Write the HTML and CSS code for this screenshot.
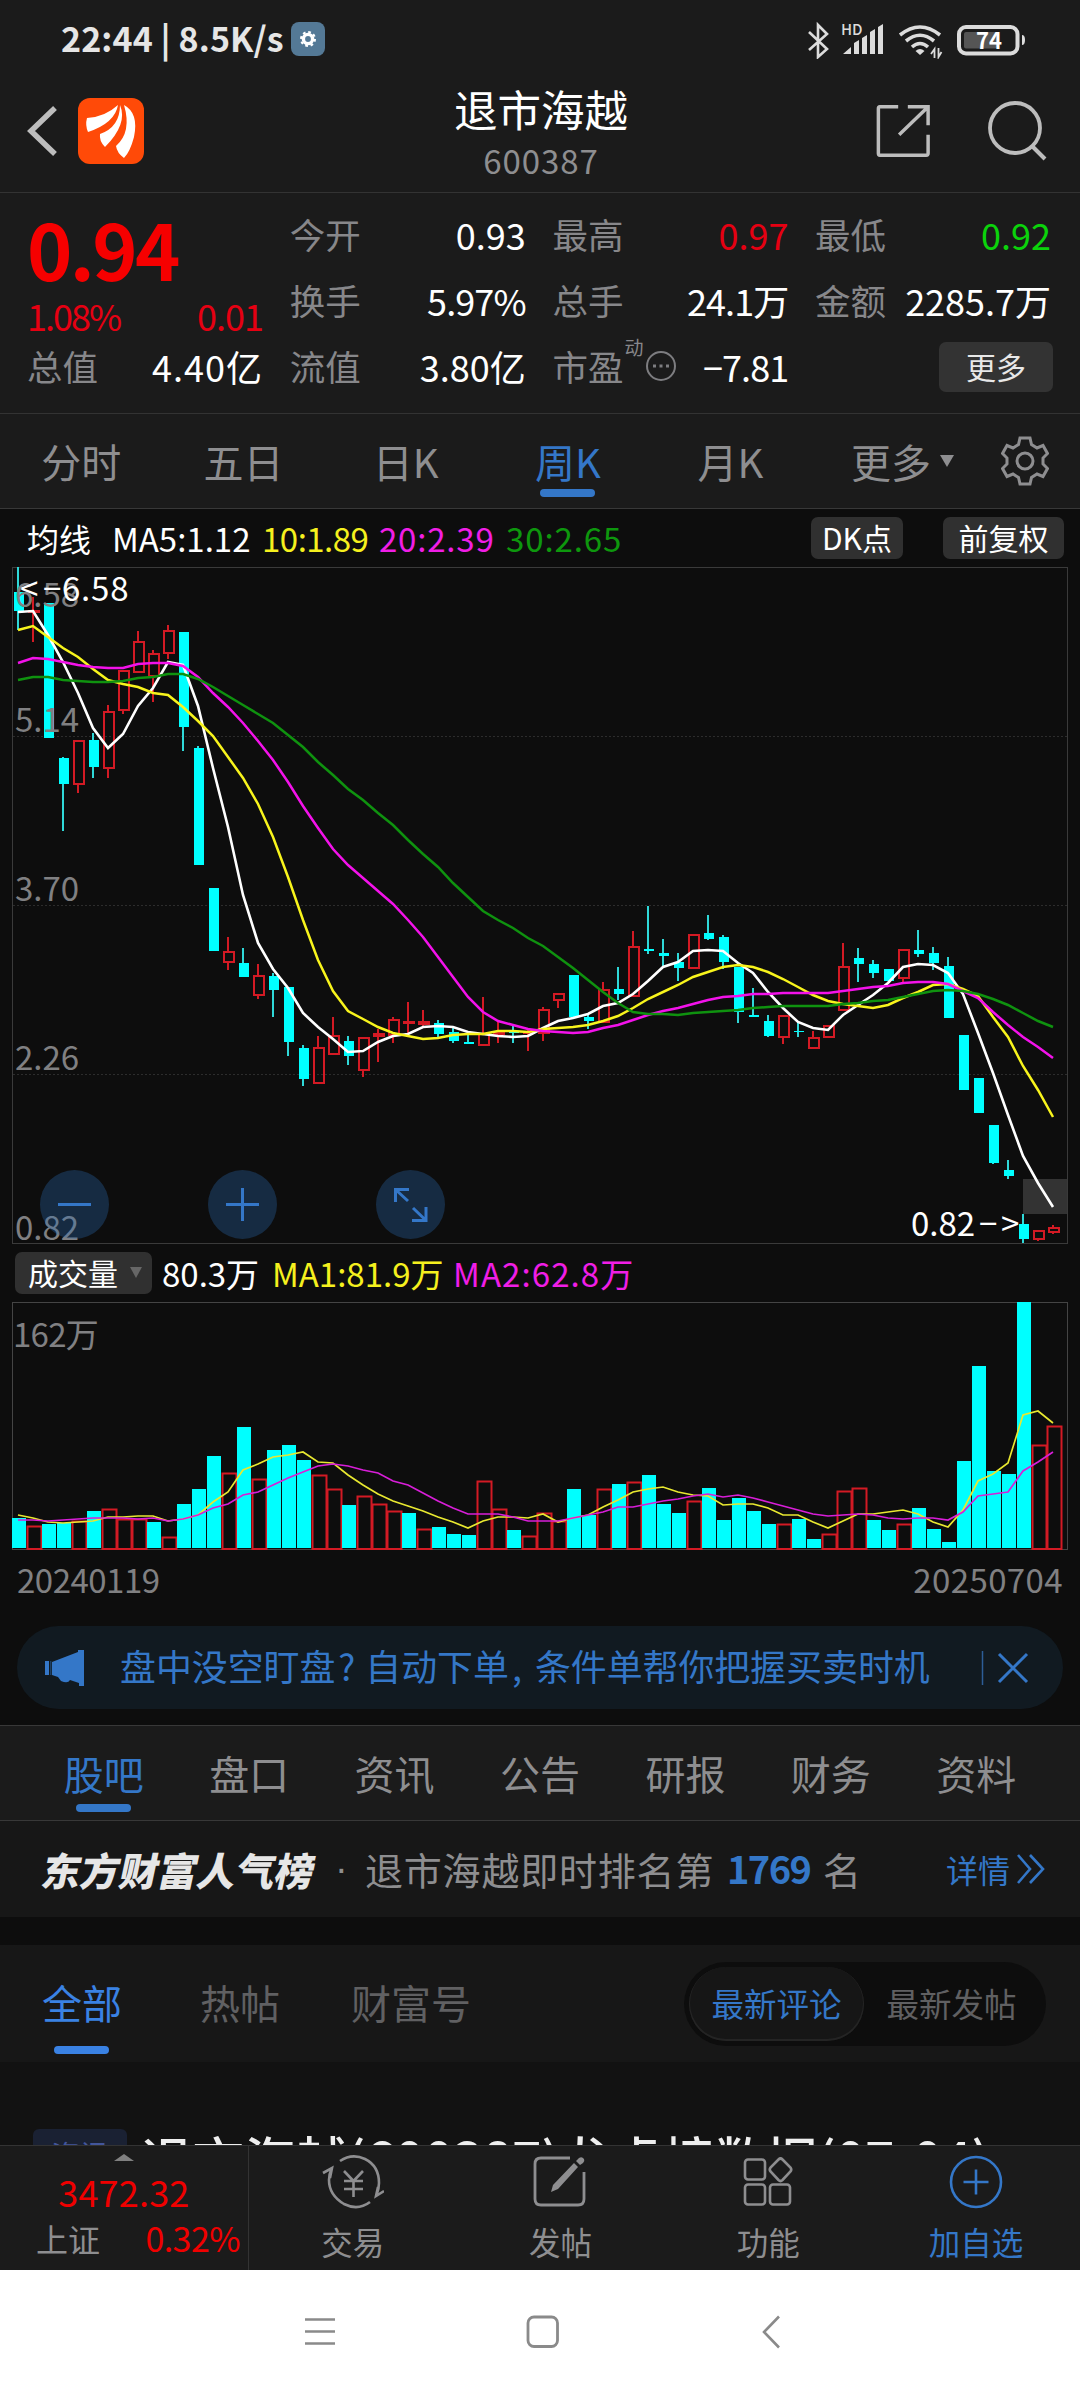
FILE: index.html
```html
<!DOCTYPE html>
<html lang="zh-CN">
<head>
  <meta charset="UTF-8" />
  <meta name="viewport" content="width=device-width, initial-scale=1.0"/>
  <title>退市海越 600387</title>
  <link rel="stylesheet" href="styles.css">
</head>
<body>

  <div class="statusbar">
    <span class="clock">22:44 | 8.5K/s</span>
    <span class="badge">
      <svg width="16" height="16" viewBox="0 0 16 16"><circle cx="8" cy="8" r="4.6" fill="none" stroke="#fff" stroke-width="3.4"/><circle cx="8" cy="8" r="7" fill="none" stroke="#fff" stroke-width="2" stroke-dasharray="2.75 2.75"/></svg>
    </span>
    <svg class="status-icons" width="220" height="40" viewBox="806 18 220 40">
      <path d="M809 31 L827 48 L818 56 V24 L827 33 L809 49" fill="none" stroke="#dcdcdc" stroke-width="2.6"/>
      <text x="841" y="34" class="hd">HD</text>
      <path d="M843 53 L851 46 V53Z M854 53 V42 L859 39 V53Z M862 53 V37 L867 34 V53Z M870 53 V31 L875 28 V53Z M878 53 V26 L883 23 V53Z" fill="#dcdcdc"/>
      <g fill="none" stroke="#dcdcdc" stroke-width="3.6">
        <path d="M900 34 Q920 18 940 34"/>
        <path d="M906 40 Q920 28.500 934 40"/>
        <path d="M912 46 Q920 39 928 46"/>
      </g>
      <path d="M915.500 50 Q920 46 924.500 50 L920 54Z" fill="#dcdcdc"/>
      <path d="M934.500 57 V48 L931 53 M938.500 47 V56 L941.500 51" fill="none" stroke="#dcdcdc" stroke-width="1.8"/>
      <rect x="959" y="26" width="58.500" height="26.500" rx="7" fill="none" stroke="#dcdcdc" stroke-width="4"/>
      <rect x="964" y="31" width="33" height="16.500" rx="2" fill="#555"/>
      <path d="M1022 34 Q1025 34 1025 39 Q1025 44 1022 44Z" fill="#dcdcdc"/>
      <text x="976" y="47.500" class="battery">74</text>
    </svg>
  </div>

  <div class="header">
    <svg class="back" width="32" height="54" viewBox="0 0 32 54"><path d="M29 4 L5 27 L29 50" fill="none" stroke="#bdbdbd" stroke-width="5.500"/></svg>
    <svg class="logo" width="66" height="66" viewBox="0 0 66 66">
      <rect width="66" height="66" rx="12" fill="#ff4a08"/>
      <path d="M9 20 Q27 19 40 7 Q37 25 10 34 Q7 27 9 20Z" fill="#fff"/>
      <path d="M42 7 Q50 26 27 49 Q21 43 22 36 Q42 29 42 7Z" fill="#fff"/>
      <path d="M46 7 Q61 15 56 39 Q52 54 46 60 Q39 55 38 48 Q54 34 46 7Z" fill="#fff"/>
    </svg>
    <div class="title">
      <h1>退市海越</h1>
      <p>600387</p>
    </div>
    <svg class="share" width="56" height="56" viewBox="0 0 58 58"><path d="M24 4 H5 Q3.500 4 3.500 6 V52 Q3.500 54 5 54 H53 Q55 54 55 52 V33 M34 4 H55 V23 M54 5 L25 33" fill="none" stroke="#bdbdbd" stroke-width="3.600"/></svg>
    <svg class="search" width="62" height="62" viewBox="0 0 62 62"><circle cx="28" cy="28" r="25" fill="none" stroke="#bdbdbd" stroke-width="3.800"/><path d="M45 46 L58 59" stroke="#bdbdbd" stroke-width="4"/></svg>
  </div>

  <div class="quote">
    <div class="col">
      <div class="price">0.94</div>
      <div class="row change"><b class="pct">1.08%</b><b>0.01</b></div>
      <div class="row"><span>总值</span><b class="loose">4.40亿</b></div>
    </div>
    <div class="col">
      <div class="row"><span>今开</span><b>0.93</b></div>
      <div class="row"><span>换手</span><b class="tight">5.97%</b></div>
      <div class="row"><span>流值</span><b>3.80亿</b></div>
    </div>
    <div class="col">
      <div class="row"><span>最高</span><b class="up">0.97</b></div>
      <div class="row"><span>总手</span><b class="tight">24.1万</b></div>
      <div class="row">
        <span class="pe">市盈<sup>动</sup><svg width="32" height="32" viewBox="0 0 32 32"><circle cx="16" cy="16" r="14" fill="none" stroke="#7d7d80" stroke-width="2"/><path d="M8 16h3M14.500 16h3M21 16h3" stroke="#7d7d80" stroke-width="3"/></svg></span>
        <b class="tight">−7.81</b>
      </div>
    </div>
    <div class="col">
      <div class="row"><span>最低</span><b class="down">0.92</b></div>
      <div class="row"><span>金额</span><b>2285.7万</b></div>
      <div class="row end"><button class="more">更多</button></div>
    </div>
  </div>

  <div class="periods">
    <span>分时</span>
    <span>五日</span>
    <span>日K</span>
    <span class="active">周K</span>
    <span>月K</span>
    <span class="wide">更多<i class="caret"></i></span>
    <svg width="48" height="50" viewBox="0 0 48 50">
      <path d="M19 2 H29 L30.500 8.500 L36 12 L42 9.500 L46.500 17.500 L42 22 V28 L46.500 32.500 L42 40.500 L36 38 L30.500 41.500 L29 48 H19 L17.500 41.500 L12 38 L6 40.500 L1.500 32.500 L6 28 V22 L1.500 17.500 L6 9.500 L12 12 L17.500 8.500Z" fill="none" stroke="#8e8e90" stroke-width="3"/>
      <circle cx="24" cy="25" r="8" fill="none" stroke="#8e8e90" stroke-width="3"/>
    </svg>
  </div>

  <div class="legend">
    <span class="name">均线</span>
    <span class="ma5">MA5:1.12</span>
    <span class="ma10">10:1.89</span>
    <span class="ma20">20:2.39</span>
    <span class="ma30">30:2.65</span>
    <button class="dk">DK点</button>
    <button class="fq">前复权</button>
  </div>

  <svg id="kline" class="kline" viewBox="0 567 1080 679"></svg>

  <div class="legend volume-legend">
    <button class="vol">成交量<i class="caret"></i></button>
    <span class="v0">80.3万</span>
    <span class="v1">MA1:81.9万</span>
    <span class="v2">MA2:62.8万</span>
  </div>

  <svg id="volume" class="volume" viewBox="0 1300 1080 252"></svg>
  <div class="dates"><span class="from">20240119</span><span class="to">20250704</span></div>

  <div class="notice">
    <svg width="44" height="40" viewBox="0 0 44 40"><path d="M2 13h4v14H2z M9 14 L35 4 V2 H41 V38 H36 V35 L27 32 Q25 36 18 33 L15 29 L9 27Z" fill="#3477c8"/><path d="M7.800 13v14" stroke="#24517f" stroke-width="1"/></svg>
    <p>盘中没空盯盘<i class="q">?</i>自动下单<i class="c">,</i>条件单帮你把握买卖时机</p>
    <svg class="close" width="48" height="36" viewBox="0 0 48 36"><path d="M1.500 1v34" stroke="#2d5d97" stroke-width="1.500"/><path d="M18 4 L46 32 M46 4 L18 32" stroke="#3477c8" stroke-width="3"/></svg>
  </div>

  <div class="tabs">
    <span class="active">股吧</span>
    <span>盘口</span>
    <span>资讯</span>
    <span>公告</span>
    <span>研报</span>
    <span>财务</span>
    <span>资料</span>
  </div>

  <div class="rank">
    <strong>东方财富人气榜</strong>
    <i>·</i>
    <span class="desc">退市海越即时排名第</span>
    <em>1769</em>
    <span>名</span>
    <a>详情<svg width="30" height="32" viewBox="0 0 30 32"><path d="M2 2 L14 16 L2 30 M14 2 L27 16 L14 30" fill="none" stroke="#3477c8" stroke-width="2.600"/></svg></a>
  </div>

  <div class="filter">
    <span class="active">全部</span>
    <span>热帖</span>
    <span>财富号</span>
    <div class="switch"><span class="on">最新评论</span><span>最新发帖</span></div>
  </div>

  <div class="post">
    <span class="tag">资讯</span>
    <h3>退市海越(600387)龙虎榜数据(07-04)</h3>
  </div>

  <div class="bottombar">
    <div class="index">
      <i class="up-caret"></i>
      <b>3472.32</b>
      <p><span>上证</span><b>0.32%</b></p>
    </div>
    <div class="item">
      <svg width="62" height="58" viewBox="0 0 62 58"><g fill="none" stroke="#8e8e90" stroke-width="2.600"><path d="M18 8 Q30 0 43 6 Q57 13 57 30 Q57 36 54.500 42 M62 38 L54 43 L56 34"/><path d="M48 49 Q36 58 22 51 Q7 42 7 27 Q7 21 9.500 16 M1 20 L10 15 L8 25"/><path d="M22 18 L31.500 28 L41 18 M22 28h19M22 36h19M31.500 28v16"/></g></svg>
      <span>交易</span>
    </div>
    <div class="item">
      <svg width="56" height="58" viewBox="0 0 56 58"><path d="M38 5 H9 Q3 5 3 11 V46 Q3 52 9 52 H46 Q52 52 52 46 V19" fill="none" stroke="#8e8e90" stroke-width="2.800"/><path d="M42 10 L46 14 L26 36 L19 39 L21 32Z M44 8 L47 5 Q50 3 52 6 Q53 8 51 10 L48 12Z" fill="#8e8e90"/></svg>
      <span>发帖</span>
    </div>
    <div class="item">
      <svg width="56" height="58" viewBox="0 0 56 58"><g fill="none" stroke="#8e8e90" stroke-width="2.600"><rect x="5" y="6.500" width="20" height="20" rx="3"/><rect x="5" y="31.500" width="20" height="20" rx="3"/><rect x="30" y="31.500" width="20" height="20" rx="3"/><path d="M38.500 6.500 Q40.500 4.500 42.500 6.500 L50.500 14.500 Q52 16.500 50.500 18.500 L42.500 27 Q40.500 29 38.500 27 L30.500 18.500 Q29 16.500 30.500 14.500Z"/></g></svg>
      <span>功能</span>
    </div>
    <div class="item blue">
      <svg width="56" height="58" viewBox="0 0 56 58"><circle cx="28" cy="29" r="25" fill="none" stroke="#3477c8" stroke-width="2.600"/><path d="M15.500 29h25M28 16.500v25" stroke="#3477c8" stroke-width="2.600"/></svg>
      <span>加自选</span>
    </div>
  </div>

  <div class="navbar">
    <svg width="32" height="32" viewBox="0 0 32 32"><path d="M1 3.500h30M1 15.500h30M1 27.500h30" stroke="#8a8a8a" stroke-width="2.600"/></svg>
    <svg width="34" height="34" viewBox="0 0 34 34"><rect x="2" y="2" width="29.500" height="29.500" rx="6" fill="none" stroke="#8a8a8a" stroke-width="2.800"/></svg>
    <svg width="20" height="34" viewBox="0 0 20 34"><path d="M18 1.500 L3 17 L18 32.500" fill="none" stroke="#8a8a8a" stroke-width="2.600"/></svg>
  </div>

  <script src="script.js"></script>
</body>
</html>
```
FILE: styles.css
```css
* {
  box-sizing: border-box;
}
body {
  margin: 0;
  width: 1080px;
  height: 2400px;
  overflow: hidden;
  background-color: #0d0d0d;
  color: #8e8e90;
  font-family: "Noto Sans CJK SC", "Noto Sans", sans-serif;
  font-size: 36px;
  line-height: 1;
}
h1, h3, p {
  margin: 0;
}
i, em {
  font-style: normal;
}
b {
  font-weight: 400;
}
svg {
  display: block;
  flex: none;
}
button {
  border: none;
  padding: 0;
  border-radius: 7px;
  background: #303030;
  color: #fff;
  font-family: inherit;
  font-size: 30px;
  line-height: 1;
}

/* status bar */
.statusbar {
  display: flex;
  align-items: center;
  height: 78px;
  padding: 0 54px 0 61px;
  background: #1b1b1b;
}
.clock {
  width: 230px;
  padding-bottom: 3px;
  color: #e6e6e6;
  font-size: 34px;
  font-weight: 700;
  letter-spacing: 0.1px;
  white-space: nowrap;
}
.badge {
  display: flex;
  align-items: center;
  justify-content: center;
  width: 34px;
  height: 34px;
  border-radius: 8px;
  background: #547996;
}
.status-icons {
  margin-left: auto;
}
.hd {
  font-size: 15px;
  font-weight: 500;
  fill: #dcdcdc;
}
.battery {
  font-size: 22px;
  font-weight: 700;
  fill: #fff;
}

/* header */
.header {
  display: flex;
  align-items: center;
  height: 115px;
  padding: 0 31px 9px 26px;
  background: #1b1b1b;
  border-bottom: 1px solid #333;
}
.logo {
  margin-left: 20px;
}
.title {
  margin-left: 310px;
  padding-top: 3px;
  text-align: center;
}
.header h1 {
  color: #fff;
  font-size: 43.5px;
  font-weight: 400;
}
.header p {
  margin-top: 14px;
  font-size: 33px;
  letter-spacing: 0.9px;
}
.share {
  margin-left: auto;
  margin-right: 56px;
}

/* quote */
.quote {
  display: grid;
  grid-template-columns: repeat(4, 236px);
  column-gap: 26.7px;
  height: 221px;
  padding: 10px 27px 0;
  background: #1b1b1b;
  border-bottom: 1px solid #333;
}
.row {
  display: flex;
  align-items: center;
  justify-content: space-between;
  height: 66px;
  padding-bottom: 4px;
  white-space: nowrap;
}
.row span {
  color: #87878a;
  font-size: 35.5px;
}
.row b {
  color: #fff;
}
.row .tight {
  letter-spacing: -0.9px;
}
.row .loose {
  letter-spacing: 1px;
}
.row .up,
.change b {
  color: #e60012;
}
.row .down {
  color: #0bd30b;
}
.row.end {
  justify-content: flex-end;
  padding-bottom: 2px;
  margin-right: -2px;
}
.price {
  height: 90px;
  color: #f60000;
  font-size: 77px;
  font-weight: 700;
  letter-spacing: -2.6px;
  line-height: 90px;
}
.row.change {
  height: 42px;
  padding: 1px 0 0;
}
.change b {
  letter-spacing: -1px;
}
.change .pct {
  letter-spacing: -2px;
}
.row .pe {
  display: flex;
  align-items: center;
}
.pe sup {
  margin: -38px 2px 0 1px;
  font-size: 19px;
  line-height: 20px;
  vertical-align: baseline;
}
.more {
  width: 114px;
  height: 50px;
  padding-bottom: 3px;
  background: #333;
  color: #e8e8e8;
}

/* period tabs */
.periods {
  display: flex;
  align-items: center;
  height: 95px;
  background: #1b1b1b;
  border-bottom: 1px solid #383838;
}
.periods span {
  width: 162.3px;
  text-align: center;
  font-size: 40px;
}
.periods .wide {
  display: flex;
  align-items: center;
  justify-content: center;
  width: 190px;
  padding-right: 8px;
}
.periods .active,
.tabs .active,
.filter .active {
  position: relative;
  color: #3477c8;
}
.periods .active::after,
.tabs .active::after,
.filter .active::after {
  content: "";
  position: absolute;
  left: 50%;
  bottom: -16px;
  width: 55px;
  height: 8px;
  margin-left: -28px;
  border-radius: 4px;
  background: #3477c8;
}
.caret {
  border: 7.500px solid transparent;
  border-top: 12px solid #8e8e90;
  border-bottom: 0;
  margin-left: 9px;
}

/* chart legends */
.legend {
  display: flex;
  align-items: center;
  height: 58px;
  padding: 0 16px 0 27px;
  color: #fff;
  font-size: 33px;
  white-space: nowrap;
}
.legend .name {
  width: 85px;
  font-size: 32px;
}
.ma5 {
  width: 150px;
}
.ma10 {
  width: 117px;
  color: #f5f01e;
  letter-spacing: -0.5px;
}
.ma20 {
  width: 127px;
  color: #f01ee6;
  letter-spacing: 0.8px;
}
.ma30 {
  color: #0d970d;
  letter-spacing: 0.9px;
}
.legend button {
  height: 42px;
  padding-bottom: 2px;
}
.dk {
  width: 92px;
  margin-left: auto;
}
.fq {
  width: 121px;
  margin-left: 40px;
}
.volume-legend {
  height: 54px;
  padding: 0 0 0 15px;
}
.legend .vol {
  display: flex;
  align-items: center;
  width: 137px;
  padding-left: 13px;
  margin-right: 10px;
}
.vol .caret {
  border-width: 11px 6.500px 0;
  border-top-color: #666;
  margin-left: 12px;
}
.v0 {
  width: 110px;
}
.v1 {
  width: 181px;
  color: #f5f01e;
}
.v2 {
  color: #f01ee6;
  letter-spacing: 1.1px;
}
.kline,
.volume {
  width: 1080px;
}
.kline {
  height: 679px;
}
.volume {
  height: 252px;
}
.axis {
  fill: #808082;
  font-size: 33px;
}
.mark {
  fill: #fff;
  font-size: 33px;
}
.dates {
  display: flex;
  justify-content: space-between;
  height: 74px;
  padding: 11px 17px 0;
  font-size: 33px;
  color: #808082;
}
.from {
  letter-spacing: -0.5px;
}
.to {
  letter-spacing: 0.4px;
}

/* notice */
.notice {
  display: flex;
  align-items: center;
  height: 83px;
  margin: 0 17px 16px;
  padding: 0 34px 0 26px;
  border-radius: 42px;
  background: #111a21;
  color: #3477c8;
}
.notice p {
  margin-left: 33px;
  padding-bottom: 3px;
  white-space: nowrap;
  font-size: 35.9px;
}
.notice .q,
.notice .c {
  display: inline-block;
  width: 30px;
  padding-left: 3px;
}
.notice .c {
  width: 26px;
}
.notice .close {
  margin-left: auto;
}

/* info tabs */
.tabs {
  display: flex;
  align-items: center;
  height: 96px;
  padding: 0 31px;
  background: #1b1b1b;
  border-top: 1px solid #383838;
  border-bottom: 1px solid #383838;
}
.tabs span {
  flex: 1;
  text-align: center;
  font-size: 40px;
}
.tabs .active::after {
  bottom: -19px;
}

.rank {
  display: flex;
  align-items: center;
  height: 96px;
  padding: 0 34px 0 43px;
  margin-bottom: 28px;
  background: #171717;
  white-space: nowrap;
  font-size: 38px;
}
.rank strong {
  width: 292px;
  color: #e6e6e6;
  font-size: 38.900px;
  font-weight: 900;
  transform: skewX(-12deg);
}
.rank i {
  width: 30px;
  font-family: "Liberation Sans", sans-serif;
}
.rank .desc {
  width: 362px;
  letter-spacing: 0.8px;
}
.rank em {
  width: 96px;
  padding-bottom: 3px;
  color: #3477c8;
  font-size: 38px;
  font-weight: 700;
  letter-spacing: -1.600px;
}
.rank a {
  display: flex;
  align-items: center;
  margin-left: auto;
  color: #3477c8;
  font-size: 32px;
}
.rank a svg {
  margin-left: 6px;
}

.filter {
  display: flex;
  align-items: center;
  height: 117px;
  padding: 0 34px 0 42px;
  background: #171717;
  font-size: 40px;
  color: #606062;
}
.filter > span {
  margin-right: 78px;
  padding-bottom: 3px;
}
.filter > span + span {
  margin-right: 71px;
}
.filter .active {
  color: #3a82e4;
}
.filter .active::after {
  bottom: -29px;
  background: #3a82e4;
}
.switch {
  display: flex;
  align-items: center;
  width: 362px;
  height: 84px;
  margin-left: auto;
  padding: 5px;
  border-radius: 42px;
  background: #0d0d0d;
  font-size: 32.500px;
}
.switch span {
  width: 175px;
  height: 74px;
  text-align: center;
  line-height: 72px;
}
.switch .on {
  border-radius: 37px;
  background: #161616;
  box-shadow: inset 0 -1px 0 1px #242424;
  color: #3477c8;
}

/* first post, cut off by the bottom bar */
.post {
  display: flex;
  align-items: flex-start;
  height: 83px;
  padding: 67px 0 0 33px;
  overflow: hidden;
  background: #121212;
  white-space: nowrap;
}
.tag {
  flex: none;
  width: 94px;
  height: 46px;
  border-radius: 6px;
  background: #1a2133;
  color: #43569b;
  font-size: 29px;
  line-height: 50px;
  text-align: center;
}
.post h3 {
  margin: 3px 0 0 14px;
  color: #eee;
  font-size: 51.5px;
  font-weight: 500;
}

/* bottom bar */
.bottombar {
  display: flex;
  height: 125px;
  background: #1b1b1b;
  border-top: 1px solid #333;
}
.index {
  display: flex;
  flex-direction: column;
  align-items: center;
  width: 249px;
  padding-top: 8px;
  border-right: 1px solid #333;
  color: #f00000;
}
.up-caret {
  border: 10px solid transparent;
  border-top: 0;
  border-bottom: 7px solid #808080;
}
.index > b {
  margin-top: 12px;
  letter-spacing: 0.2px;
}
.index p {
  display: flex;
  align-items: center;
  justify-content: space-between;
  width: 204px;
  margin: 12px 0 0 28px;
  font-size: 34px;
}
.index p b {
  letter-spacing: -0.6px;
}
.index span {
  color: #8e8e90;
  font-size: 32px;
}
.item {
  display: flex;
  flex-direction: column;
  align-items: center;
  width: 208px;
  padding-top: 7px;
  font-size: 31.500px;
}
.item span {
  margin-top: 15px;
}
.item.blue {
  color: #3477c8;
}

.navbar {
  display: flex;
  align-items: center;
  height: 130px;
  padding: 0 0 6px 304px;
  background: #fff;
}
.navbar svg + svg {
  margin-left: 190px;
}
.navbar svg + svg + svg {
  margin-left: 201px;
}
```
FILE: script.js
```js
const STEP = 15;
const UP = "#d31a24";
const DOWN = "#00ffff";

// [up/down, body top, body bottom, wick top, wick bottom]
const candles = [
  ["d",592,611,567,630], ["u",610,613,597,642], ["d",603,738,603,738], ["d",758,784,757,831], ["u",740,785,740,793],
  ["d",740,767,733,778], ["u",711,769,705,778], ["u",670,711,670,714], ["u",641,673,631,673], ["u",653,677,650,702],
  ["u",630,654,625,659], ["d",632,727,632,751], ["d",748,865,746,865], ["d",888,951,888,951], ["u",951,963,937,970],
  ["d",963,977,948,977], ["u",975,996,964,999], ["d",976,990,973,1017], ["d",987,1042,987,1056], ["d",1048,1079,1045,1086],
  ["u",1047,1084,1036,1084], ["u",1035,1055,1017,1055], ["d",1041,1056,1036,1065], ["u",1037,1071,1037,1077], ["u",1033,1037,1029,1062],
  ["u",1019,1036,1017,1043], ["u",1021,1024,1002,1033], ["u",1021,1025,1010,1027], ["d",1023,1034,1020,1037], ["d",1032,1041,1028,1043],
  ["d",1042,1044,1033,1044], ["u",1033,1046,997,1046], ["u",1032,1035,1022,1043], ["d",1031,1033,1026,1043], ["u",1031,1034,1030,1051],
  ["u",1009,1034,1007,1041], ["u",993,1001,993,1008], ["d",975,1017,975,1017], ["d",1017,1021,1015,1029], ["u",989,1023,982,1023],
  ["d",989,994,967,1000], ["u",946,997,931,997], ["d",949,951,906,954], ["d",953,956,939,967], ["d",962,968,953,981],
  ["u",934,969,934,969], ["d",933,939,915,940], ["d",937,962,935,969], ["d",967,1012,967,1023], ["d",1015,1017,988,1017],
  ["d",1021,1036,1015,1037], ["u",1015,1038,1015,1044], ["d",1031,1032,1022,1037], ["u",1037,1049,1031,1049], ["u",1025,1038,1025,1038],
  ["u",966,1011,943,1011], ["d",958,964,948,982], ["d",964,973,960,978], ["d",969,981,969,981], ["u",949,979,949,982],
  ["d",950,954,930,957], ["d",953,963,947,970], ["d",966,1018,957,1018], ["d",1035,1090,1035,1090], ["d",1078,1113,1078,1113],
  ["d",1125,1163,1125,1164], ["d",1170,1176,1160,1179], ["d",1224,1239,1214,1243], ["u",1230,1240,1230,1241], ["u",1227,1233,1225,1234]
];

const ma5 = [612,611,635,662,693,728,748,734,706,688,662,665,706,768,827,895,943,969,988,1013,1027,1039,1052,1051,1042,
  1036,1034,1027,1026,1027,1032,1034,1036,1037,1036,1028,1021,1018,1014,1006,1003,994,981,967,962,951,950,951,963,973,
  992,1008,1022,1028,1030,1015,1005,995,983,967,964,965,973,994,1033,1073,1115,1156,1183,1207];
const ma10 = [630,626,637,648,657,669,680,684,687,693,695,707,721,736,757,778,804,837,877,920,960,991,1011,1019,1027,
  1033,1036,1039,1038,1035,1034,1034,1031,1031,1032,1029,1028,1027,1025,1021,1016,1008,999,992,985,977,972,967,965,967,
  972,979,987,995,1001,1004,1006,1008,1005,998,992,985,984,989,996,1017,1037,1066,1090,1117];
const ma20 = [663,658,659,662,665,667,668,668,664,663,663,666,677,693,707,723,741,760,782,806,828,849,865,878,891,
  904,920,937,957,977,997,1012,1021,1025,1029,1031,1032,1033,1032,1028,1025,1020,1015,1011,1008,1004,1000,997,996,994,
  994,993,993,993,993,991,989,987,986,983,982,982,984,991,998,1012,1025,1037,1047,1058];
const ma30 = [680,677,677,680,681,682,682,681,678,677,674,674,679,687,696,705,714,723,735,747,762,775,789,800,813,
  825,840,854,867,883,897,911,920,928,938,946,957,968,980,992,1003,1012,1014,1014,1015,1013,1012,1011,1010,1008,
  1007,1006,1006,1006,1006,1004,1003,1001,1000,997,994,991,990,991,994,999,1005,1013,1021,1027];

const volumes = [
  "d1518","u1526","d1524","d1523","u1521","d1511","u1509","u1519","u1519","d1522","u1537","d1504","d1489","d1456","u1473",
  "d1427","u1479","d1450","d1445","d1460","u1475","u1489","d1505","u1496","u1504","u1511","d1513","u1529","d1527","d1534",
  "d1535","u1481","u1509","d1530","u1536","u1513","u1521","d1489","d1515","u1489","d1484","u1482","d1475","d1504","d1513",
  "u1501","d1488","d1520","d1498","d1511","d1524","u1524","d1519","d1539","u1534","u1491","u1488","d1520","d1530","u1524",
  "d1508","d1529","d1542","d1461","d1366","d1471","d1474","d1302","u1445","u1426"
];
const vma1 = [1515,1518,1522,1523,1522,1521,1517,1517,1516,1516,1521,1519,1515,1502,1492,1470,1464,1457,1455,1452,1462,1463,1475,1485,1494,
  1501,1506,1511,1517,1522,1528,1521,1517,1517,1518,1514,1522,1518,1515,1507,1500,1492,1489,1487,1492,1495,1496,1505,1504,1504,
  1508,1515,1515,1522,1528,1521,1514,1514,1512,1510,1514,1522,1527,1510,1481,1474,1463,1415,1411,1423];
const vma2 = [1520,1520,1521,1520,1519,1518,1518,1518,1519,1518,1521,1519,1515,1508,1504,1495,1492,1485,1478,1472,1466,1464,1466,1470,1473,
  1481,1485,1493,1501,1508,1514,1514,1514,1517,1521,1521,1521,1518,1515,1512,1507,1507,1504,1501,1499,1496,1494,1497,1495,1498,
  1502,1506,1510,1514,1516,1515,1514,1515,1518,1519,1518,1518,1520,1512,1496,1494,1492,1471,1462,1452];

const cx = i => 18 + i * STEP;

function line(values, color, width) {
  const points = values.map((y, i) => `${cx(i)},${y}`).join(" ");
  return `<polyline points="${points}" fill="none" stroke="${color}" stroke-width="${width}"/>`;
}

function drawKline() {
  let s = "";
  [736.5, 905.5, 1074.5].forEach(y => {
    s += `<path d="M13 ${y}H1067" stroke="#2c2c2c" stroke-width="1" stroke-dasharray="2 2"/>`;
  });
  s += `<rect x="12.5" y="567.5" width="1055" height="676" fill="none" stroke="#3a3a3a"/>`;
  s += `<rect x="1023" y="1179" width="44" height="35" fill="#333"/>`;

  candles.forEach(([dir, top, bottom, high, low], i) => {
    const x = cx(i);
    if (dir === "d") {
      s += `<rect x="${x - 1}" y="${high}" width="2" height="${low - high}" fill="#2fd8d8"/>`;
      s += `<rect x="${x - 4}" y="${top}" width="10" height="${bottom - top}" fill="${DOWN}"/>`;
    } else {
      s += `<path d="M${x} ${high}V${top}M${x} ${bottom}V${low}" stroke="${UP}" stroke-width="2"/>`;
      s += `<rect x="${x - 4}" y="${top + 1}" width="10" height="${Math.max(bottom - top - 2, 1)}" fill="none" stroke="${UP}" stroke-width="2"/>`;
    }
  });

  [["6.58", 607], ["5.14", 732], ["3.70", 901], ["2.26", 1070], ["0.82", 1240]].forEach(([t, y]) => {
    s += `<text x="15" y="${y}" class="axis">${t}</text>`;
  });

  s += line(ma5, "#fff", 2.6);
  s += line(ma10, "#f8f41c", 2.5);
  s += line(ma20, "#f312ea", 2.5);
  s += line(ma30, "#0f920f", 2.5);

  s += `<text y="601" class="mark"><tspan x="20">&lt;</tspan><tspan x="43">−</tspan><tspan x="62" letter-spacing="0.8">6.58</tspan></text>`;
  s += `<text y="1236" class="mark"><tspan x="911">0.82</tspan><tspan x="979">−</tspan><tspan x="1001">&gt;</tspan></text>`;

  // zoom buttons
  [74.5, 242.5, 410.5].forEach(x => {
    s += `<circle cx="${x}" cy="1204.5" r="34.5" fill="#2c6cb5" fill-opacity="0.32"/>`;
  });
  s += `<path d="M58 1204.500h33M226 1204.500h33M242.500 1188v33" stroke="#3477c8" stroke-width="3"/>`;
  s += `<path d="M409 1189.500H395.500V1202M396 1190L408 1201M412 1220.500H426V1207M425.500 1220L413 1208" fill="none" stroke="#3477c8" stroke-width="3"/>`;
  document.getElementById("kline").innerHTML = s;
}

function drawVolume() {
  let s = `<rect x="12.5" y="1302.5" width="1055" height="247" fill="none" stroke="#444"/>`;
  volumes.forEach((v, i) => {
    const x = cx(i);
    const top = parseInt(v.slice(1));
    if (v[0] === "d") {
      s += `<rect x="${x - 6}" y="${top}" width="14" height="${1548 - top}" fill="${DOWN}"/>`;
    } else {
      s += `<rect x="${x - 5.5}" y="${top + 0.5}" width="14" height="${1548.5 - top}" fill="none" stroke="${UP}" stroke-width="2"/>`;
    }
  });
  s += `<text x="13" y="1347" class="axis" letter-spacing="-0.7">162万</text>`;
  s += line(vma1, "#e8e830", 1.7);
  s += line(vma2, "#d81ed8", 1.7);
  document.getElementById("volume").innerHTML = s;
}

drawKline();
drawVolume();
```
